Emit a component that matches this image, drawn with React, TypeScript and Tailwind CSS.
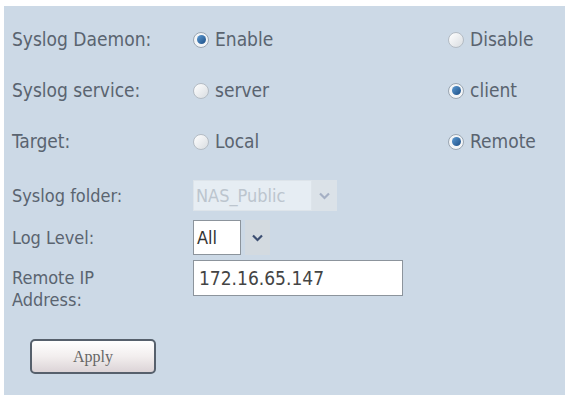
import React from "react";

const font = { fontFamily: '"DejaVu Sans Condensed", "DejaVu Sans", Verdana, sans-serif' };

// Radio bullet drawn like the old XP-ish theme
const Radio = ({ checked }: { checked: boolean }) => (
  <span
    className={`relative inline-flex items-center justify-center w-[16px] h-[16px] rounded-full border ${
      checked ? "border-[#9aa6b2] bg-[#f3f5f7]" : "border-[#b4bcc4] bg-gradient-to-br from-white to-[#d9dde1]"
    }`}>
    {checked && (
      <span className="w-[9px] h-[9px] rounded-full bg-gradient-to-br from-[#5d9bd3] to-[#1d4f86]" />
    )}
  </span>
);

const Option = ({ label, checked }: { label: string; checked: boolean }) => (
  <div className="flex items-center gap-[6px]">
    <Radio checked={checked} />
    <span>{label}</span>
  </div>
);

const Chevron = ({ color }: { color: string }) => (
  <svg width="11" height="8" viewBox="0 0 11 8">
    <path d="M1 1.5 L5.5 6 L10 1.5" fill="none" stroke={color} strokeWidth="2.2" />
  </svg>
);

const radioRows = [
  { label: "Syslog Daemon:", a: "Enable", b: "Disable", first: true },
  { label: "Syslog service:", a: "server", b: "client", first: false },
  { label: "Target:", a: "Local", b: "Remote", first: false },
];

export default function App() {
  return (
    <div className="w-[568px] h-[395px] bg-white pt-[6px] pl-[4px] pr-[3px]" style={font}>
      <div className="h-full bg-[#ccd9e6] pl-[8px] pt-[8px] text-[19px] text-[#5a6470]">
        {radioRows.map((r) => (
          <div key={r.label} className="flex items-center h-[51px]">
            <div className="w-[181px]">{r.label}</div>
            <div className="w-[255px]">
              <Option label={r.a} checked={r.first} />
            </div>
            <Option label={r.b} checked={!r.first} />
          </div>
        ))}

        {/* Syslog folder */}
        <div className="flex items-center mt-[13px] h-[31px]">
          <div className="w-[181px] text-[18px]">Syslog folder:</div>
          <div className="flex h-[31px]">
            <div className="w-[119px] border border-[#dde4ea] bg-[#e6edf3] text-[#bcc5ce] flex items-center pl-[2px] text-[18px]">
              NAS_Public
            </div>
            <div className="w-[25px] bg-[#dbe2e8] flex items-center justify-center">
              <Chevron color="#a5b0c4" />
            </div>
          </div>
        </div>

        {/* Log level */}
        <div className="flex items-center mt-[9px] h-[35px]">
          <div className="w-[181px] text-[18px]">Log Level:</div>
          <div className="flex h-[35px]">
            <div className="w-[48px] border border-[#8c949c] bg-white text-[#333] flex items-center pl-[3px] text-[18px]">
              All
            </div>
            <div className="w-[25px] ml-[4px] bg-[#d3dae0] flex items-center justify-center">
              <Chevron color="#3d4f72" />
            </div>
          </div>
        </div>

        {/* Remote IP */}
        <div className="flex mt-[5px]">
          <div className="w-[181px] text-[18px] leading-[22px] pt-[7px]">
            Remote IP
            <br />
            Address:
          </div>
          <div className="w-[210px] h-[36px] border border-[#8c949c] bg-white text-[#444] flex items-center pl-[5px] text-[19px]">
            172.16.65.147
          </div>
        </div>

        {/* Apply */}
        <div className="ml-[18px] mt-[28px]">
          <button
            className="w-[126px] h-[35px] rounded-[5px] border-2 border-[#56606c] bg-gradient-to-b from-white via-[#f2eeee] to-[#dcd4d7] text-[#666] text-[16px]"
            style={{ fontFamily: '"Liberation Serif", "Times New Roman", serif' }}>
            Apply
          </button>
        </div>
      </div>
    </div>
  );
}
